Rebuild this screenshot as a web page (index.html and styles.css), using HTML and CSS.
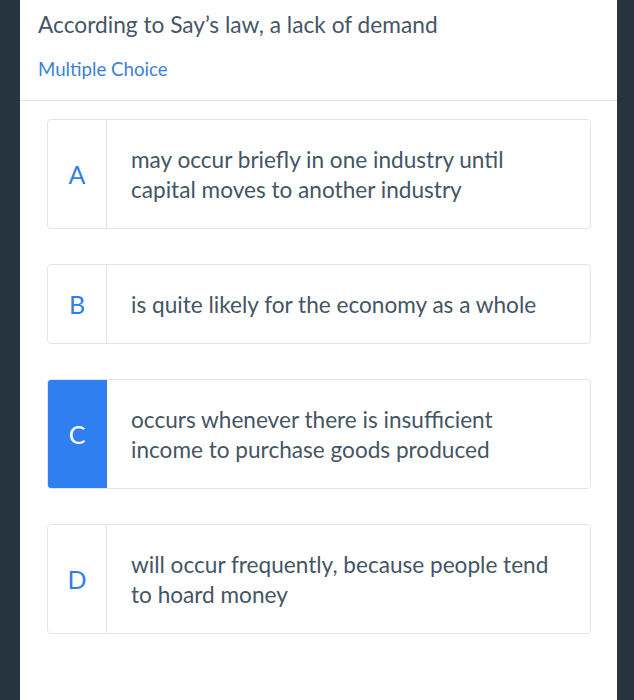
FILE: index.html
```html
<!DOCTYPE html>
<html>
<head>
<meta charset="utf-8">
<link rel="stylesheet" href="styles.css">
</head>
<body>
<main class="panel">
  <header class="question">
    <h1 class="prompt">According to Say’s law, a lack of demand</h1>
    <div class="qtype">Multiple Choice</div>
  </header>
  <ul class="options">
    <li class="option">
      <span class="letter">A</span>
      <span class="text">may occur briefly in one industry until<br>capital moves to another industry</span>
    </li>
    <li class="option">
      <span class="letter">B</span>
      <span class="text">is quite likely for the economy as a whole</span>
    </li>
    <li class="option selected">
      <span class="letter">C</span>
      <span class="text">occurs whenever there is insufficient<br>income to purchase goods produced</span>
    </li>
    <li class="option">
      <span class="letter">D</span>
      <span class="text">will occur frequently, because people tend<br>to hoard money</span>
    </li>
  </ul>
</main>
</body>
</html>
```
FILE: styles.css
```css
html, body {
  margin: 0;
  padding: 0;
  height: 100%;
}
body {
  background: #263440;
  padding-left: 20px;
  font-family: "Lato", "Noto Sans", sans-serif;
  color: #445564;
}
.panel {
  width: 597px;
  min-height: 700px;
  background: #ffffff;
}
.question {
  padding: 10px 0 0 18px;
  height: 101px;
  box-sizing: border-box;
  border-bottom: 1px solid #e2e4e6;
}
.prompt {
  margin: 0;
  font-size: 22.7px;
  font-weight: 400;
  line-height: 30px;
  color: #465666;
}
.qtype {
  margin-top: 17px;
  font-size: 18.7px;
  line-height: 24px;
  color: #3b82d6;
}
.options {
  list-style: none;
  margin: 0;
  padding: 18px 26px 0 27px;
  display: flex;
  flex-direction: column;
  gap: 35px;
}
.option {
  display: flex;
  border: 1px solid #e3e5e8;
  border-radius: 4px;
  overflow: hidden;
}
.letter {
  width: 58px;
  flex: none;
  display: flex;
  align-items: center;
  justify-content: center;
  border-right: 1px solid #e3e5e8;
  font-size: 25px;
  color: #2f7fe6;
}
.selected .letter {
  background: #2f7ff0;
  color: #ffffff;
  border-right-color: #2f7ff0;
}
.text {
  padding: 25px 0 23px 24px;
  font-size: 22.6px;
  line-height: 30px;
}
```
